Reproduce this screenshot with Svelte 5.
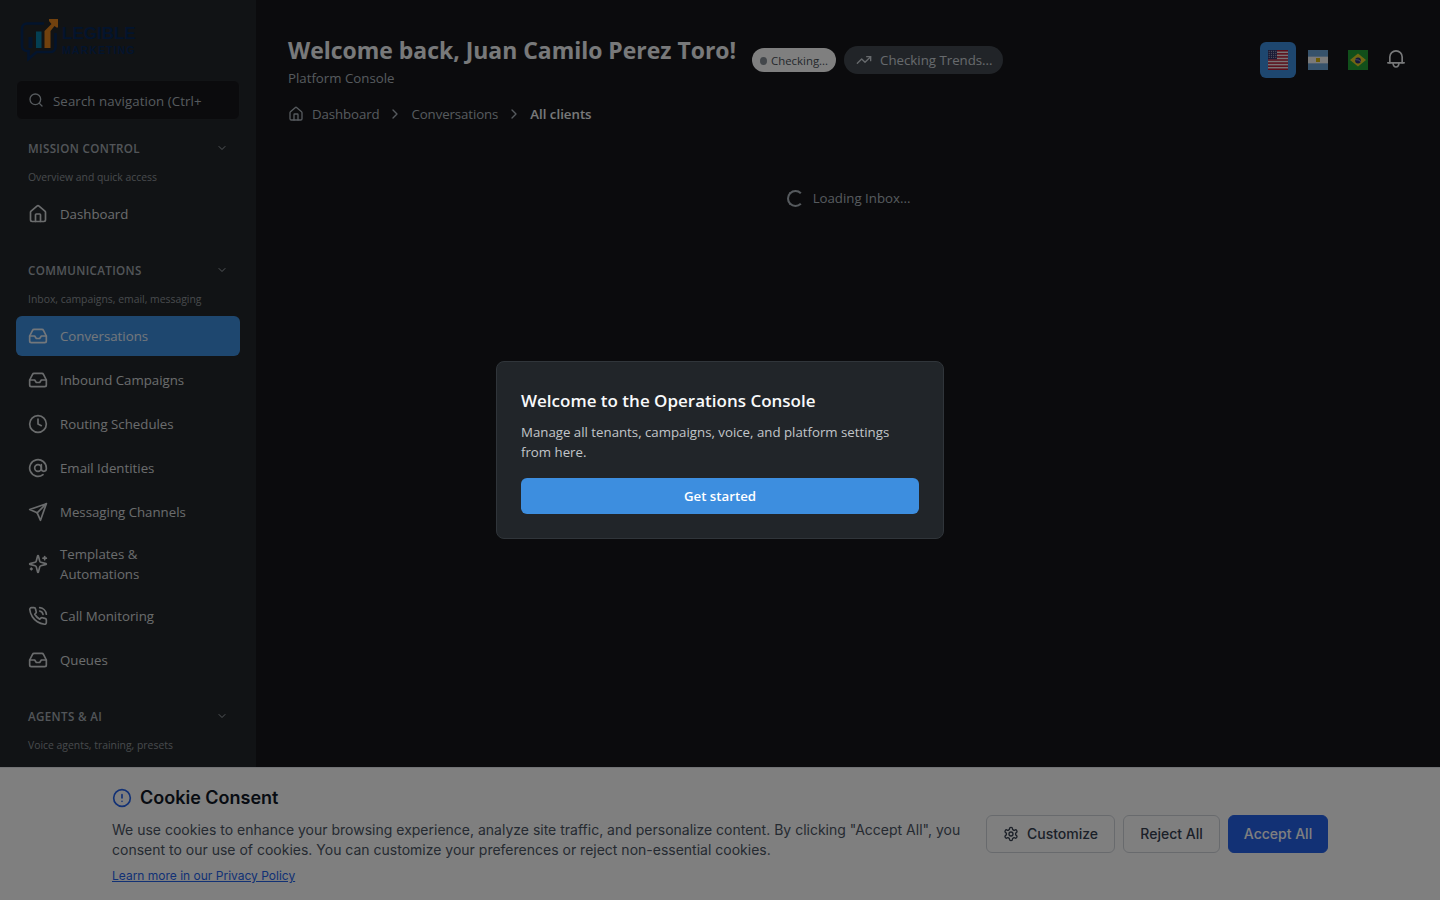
<script lang="ts">
  type IconName = keyof typeof icons;

  interface NavItem {
    label: string;
    icon: IconName;
  }

  interface NavSection {
    title: string;
    description: string;
    items: NavItem[];
  }

  const icons = {
    search: ["M21 21l-4.3-4.3", "M19 11a8 8 0 1 1-16 0a8 8 0 0 1 16 0z"],
    chevronDown: ["M6 9l6 6l6-6"],
    chevronRight: ["M9 18l6-6l-6-6"],
    home: [
      "M15 21v-8a1 1 0 0 0-1-1h-4a1 1 0 0 0-1 1v8",
      "M3 10a2 2 0 0 1 .709-1.528l7-5.999a2 2 0 0 1 2.582 0l7 5.999A2 2 0 0 1 21 10v9a2 2 0 0 1-2 2H5a2 2 0 0 1-2-2z",
    ],
    inbox: [
      "M22 12h-6l-2 3h-4l-2-3H2",
      "M5.45 5.11L2 12v6a2 2 0 0 0 2 2h16a2 2 0 0 0 2-2v-6l-3.45-6.89A2 2 0 0 0 16.76 4H7.24a2 2 0 0 0-1.79 1.11z",
    ],
    clock: ["M22 12a10 10 0 1 1-20 0a10 10 0 0 1 20 0z", "M12 6v6l4 2"],
    at: ["M16 12a4 4 0 1 1-8 0a4 4 0 0 1 8 0z", "M16 8v5a3 3 0 0 0 6 0v-1a10 10 0 1 0-4 8"],
    send: ["M22 2l-7 20l-4-9l-9-4z", "M22 2L11 13"],
    sparkles: [
      "M9.937 15.5A2 2 0 0 0 8.5 14.063l-6.135-1.582a.5.5 0 0 1 0-.962L8.5 9.936A2 2 0 0 0 9.937 8.5l1.582-6.135a.5.5 0 0 1 .963 0L14.063 8.5A2 2 0 0 0 15.5 9.937l6.135 1.581a.5.5 0 0 1 0 .964L15.5 14.063a2 2 0 0 0-1.437 1.437l-1.582 6.135a.5.5 0 0 1-.963 0z",
      "M20 3v4",
      "M22 5h-4",
      "M4 17v2",
      "M5 18H3",
    ],
    phone: [
      "M22 16.92v3a2 2 0 0 1-2.18 2a19.79 19.79 0 0 1-8.63-3.07a19.5 19.5 0 0 1-6-6a19.79 19.79 0 0 1-3.07-8.67A2 2 0 0 1 4.11 2h3a2 2 0 0 1 2 1.72a12.84 12.84 0 0 0 .7 2.81a2 2 0 0 1-.45 2.11L8.09 9.91a16 16 0 0 0 6 6l1.27-1.27a2 2 0 0 1 2.11-.45a12.84 12.84 0 0 0 2.81.7A2 2 0 0 1 22 16.92z",
      "M14.05 2a9 9 0 0 1 8 7.94",
      "M14.05 6A5 5 0 0 1 18 10",
    ],
    trending: ["M22 7l-8.5 8.5l-5-5L2 17", "M16 7h6v6"],
    bell: ["M2.200 16.600h19.600", "M4.600 16.600V9.600a7.400 7.400 0 0 1 14.800 0v7", "M8.500 17.200a3.500 4.400 0 0 0 7 0"],
    alert: ["M22 12a10 10 0 1 1-20 0a10 10 0 0 1 20 0z", "M12 8v4", "M12 16h.01"],
    gear: [
      "M12.22 2h-.44a2 2 0 0 0-2 2v.18a2 2 0 0 1-1 1.73l-.43.25a2 2 0 0 1-2 0l-.15-.08a2 2 0 0 0-2.73.73l-.22.38a2 2 0 0 0 .73 2.73l.15.1a2 2 0 0 1 1 1.72v.51a2 2 0 0 1-1 1.74l-.15.09a2 2 0 0 0-.73 2.73l.22.38a2 2 0 0 0 2.73.73l.15-.08a2 2 0 0 1 2 0l.43.25a2 2 0 0 1 1 1.73V20a2 2 0 0 0 2 2h.44a2 2 0 0 0 2-2v-.18a2 2 0 0 1 1-1.73l.43-.25a2 2 0 0 1 2 0l.15.08a2 2 0 0 0 2.73-.73l.22-.39a2 2 0 0 0-.73-2.73l-.15-.08a2 2 0 0 1-1-1.74v-.5a2 2 0 0 1 1-1.74l.15-.09a2 2 0 0 0 .73-2.73l-.22-.38a2 2 0 0 0-2.73-.73l-.15.08a2 2 0 0 1-2 0l-.43-.25a2 2 0 0 1-1-1.73V4a2 2 0 0 0-2-2z",
      "M15 12a3 3 0 1 1-6 0a3 3 0 0 1 6 0z",
    ],
  };

  const sections: NavSection[] = [
    {
      title: "Mission Control",
      description: "Overview and quick access",
      items: [{ label: "Dashboard", icon: "home" }],
    },
    {
      title: "Communications",
      description: "Inbox, campaigns, email, messaging",
      items: [
        { label: "Conversations", icon: "inbox" },
        { label: "Inbound Campaigns", icon: "inbox" },
        { label: "Routing Schedules", icon: "clock" },
        { label: "Email Identities", icon: "at" },
        { label: "Messaging Channels", icon: "send" },
        { label: "Templates & Automations", icon: "sparkles" },
        { label: "Call Monitoring", icon: "phone" },
        { label: "Queues", icon: "inbox" },
      ],
    },
    {
      title: "Agents & AI",
      description: "Voice agents, training, presets",
      items: [],
    },
  ];

  let activeItem = $state("Conversations");
  let locale = $state("en");
  let showWelcome = $state(true);
  let showCookies = $state(true);
</script>

{#snippet icon(name: IconName, size: number, stroke = 2)}
  <svg
    class="icon"
    width={size}
    height={size}
    viewBox="0 0 24 24"
    fill="none"
    stroke="currentColor"
    stroke-width={stroke}
    stroke-linecap="round"
    stroke-linejoin="round"
    aria-hidden="true"
  >
    {#each icons[name] as d}
      <path {d} />
    {/each}
  </svg>
{/snippet}

<div class="app">
  <aside class="sidebar">
    <div class="brand">
      <svg class="brand-mark" width="40" height="46" viewBox="0 0 40 46" aria-hidden="true">
        <path
          d="M25 5.500H8a5 5 0 0 0-5 5v17a5 5 0 0 0 5 5.500h1.500v8l8-7h14a5 5 0 0 0 5-5V15"
          fill="none"
          stroke="#07285a"
          stroke-width="2.6"
        />
        <rect x="9.500" y="19" width="4" height="11" fill="#07285a" />
        <rect x="17" y="13.500" width="5.500" height="16.500" fill="#087ea6" />
        <path d="M25.500 30V13l7-7l-2.500-3V1h9v8.500h-1.500l-2-1.500l-4 5V30z" fill="#e2821c" />
      </svg>
      <div class="brand-text">
        <span class="brand-name">LEGIBLE</span>
        <span class="brand-sub">MARKETING</span>
      </div>
    </div>

    <div class="search">
      {@render icon("search", 16)}
      <span>Search navigation (Ctrl+</span>
    </div>

    <nav>
      {#each sections as section}
        <section class="nav-section">
          <button class="nav-heading">
            <span>{section.title}</span>
            {@render icon("chevronDown", 12)}
          </button>
          <p class="nav-desc">{section.description}</p>
          <div class="nav-items">
            {#each section.items as item}
              <button
                class="nav-item"
                class:active={item.label === activeItem}
                onclick={() => activeItem = item.label}
              >
                {@render icon(item.icon, 20)}
                <span>{item.label}</span>
              </button>
            {/each}
          </div>
        </section>
      {/each}
    </nav>
  </aside>

  <main class="main">
    <header class="header">
      <div>
        <h1>Welcome back, Juan Camilo Perez Toro!</h1>
        <p class="subtitle">Platform Console</p>
      </div>
      <div class="pills">
        <span class="pill-status"><i class="dot"></i>Checking...</span>
        <span class="pill-trends">{@render icon("trending", 16)}Checking Trends...</span>
      </div>
      <div class="header-actions">
        <button class="flag" class:selected={locale === "en"} aria-label="English" onclick={() => locale = "en"}>
          <svg width="20" height="20" viewBox="0 0 20 20">
            <rect width="20" height="20" fill="#f0e8ea" />
            {#each [0, 3.08, 6.15, 9.23, 12.3, 15.4, 18.46] as y}
              <rect {y} width="20" height="1.540" fill="#b81c34" />
            {/each}
            <rect width="9" height="9.230" fill="#35376c" />
            {#each [1.3, 3.3, 5.3, 7.3] as y}
              {#each [1.2, 3.4, 5.6, 7.8] as x}
                <circle cx={x} cy={y} r="0.500" fill="#d8d8e4" />
              {/each}
            {/each}
          </svg>
        </button>
        <button class="flag" class:selected={locale === "es"} aria-label="Español" onclick={() => locale = "es"}>
          <svg width="20" height="20" viewBox="0 0 20 20">
            <rect width="20" height="20" fill="#6da4d6" />
            <rect y="6.670" width="20" height="6.660" fill="#f4f4f4" />
            <rect x="8" y="8" width="4" height="4" fill="#d9b70a" />
          </svg>
        </button>
        <button class="flag" class:selected={locale === "pt"} aria-label="Português" onclick={() => locale = "pt"}>
          <svg width="20" height="20" viewBox="0 0 20 20">
            <rect width="20" height="20" fill="#229e35" />
            <path d="M10 3.500L18 10l-8 6.500L2 10z" fill="#e3cd25" />
            <circle cx="10" cy="10.500" r="2.900" fill="#272f76" />
            <path d="M7.200 9.700q3.300-.4 5.600 1.800" fill="none" stroke="#d5dce9" stroke-width=".6" />
          </svg>
        </button>
        <button class="bell" aria-label="Notifications">{@render icon("bell", 20)}</button>
      </div>
    </header>

    <div class="breadcrumbs">
      {@render icon("home", 16)}
      <span class="crumb">Dashboard</span>
      {@render icon("chevronRight", 16)}
      <span class="crumb">Conversations</span>
      {@render icon("chevronRight", 16)}
      <strong>All clients</strong>
    </div>

    <div class="loading">
      <span class="spinner"></span>
      <span>Loading Inbox...</span>
    </div>
  </main>
</div>

{#if showCookies}
  <div class="cookies">
    <div class="cookies-inner">
      <div class="cookies-copy">
        <h3>{@render icon("alert", 20)}Cookie Consent</h3>
        <p>
          We use cookies to enhance your browsing experience, analyze site traffic, and personalize content. By clicking "Accept All", you consent to our use of cookies. You can customize your preferences or reject non-essential cookies.
        </p>
        <a href="#privacy">Learn more in our Privacy Policy</a>
      </div>
      <div class="cookies-actions">
        <button class="btn customize">{@render icon("gear", 16)}Customize</button>
        <button class="btn reject" onclick={() => showCookies = false}>Reject All</button>
        <button class="btn accept" onclick={() => showCookies = false}>Accept All</button>
      </div>
    </div>
  </div>
{/if}

{#if showWelcome}
  <div class="backdrop">
    <div class="modal" role="dialog" aria-modal="true" aria-labelledby="welcome-title">
      <h2 id="welcome-title">Welcome to the Operations Console</h2>
      <p>Manage all tenants, campaigns, voice, and platform settings from here.</p>
      <button class="start" onclick={() => showWelcome = false}>Get started</button>
    </div>
  </div>
{/if}

<style>
  :global(body) {
    margin: 0;
    background: #16171a;
    overflow: hidden;
  }

  :global(*) {
    box-sizing: border-box;
  }

  .app,
  .backdrop {
    font-family: "Segoe UI", "Open Sans", "Noto Sans", sans-serif;
    font-size: 13.25px;
    line-height: 20px;
  }

  h1,
  h2,
  h3,
  p {
    margin: 0;
  }

  button {
    font: inherit;
    color: inherit;
    border: 0;
    padding: 0;
    background: none;
    cursor: pointer;
  }

  .icon {
    display: block;
    flex-shrink: 0;
  }

  .app {
    display: flex;
    height: 100vh;
    color: #f1f3f5;
    overflow: hidden;
  }

  .sidebar {
    width: 256px;
    flex-shrink: 0;
    padding: 16px;
    background: #23272a;
    overflow: hidden;
  }

  .brand {
    display: flex;
    height: 64px;
    padding: 2px 0 0 3px;
    gap: 3px;
  }

  .brand-text {
    display: flex;
    flex-direction: column;
    padding-top: 6px;
    color: #07285a;
    font-family: "Liberation Sans", Arial, sans-serif;
    font-weight: 700;
  }

  .brand-name {
    font-size: 17px;
    line-height: 20px;
  }

  .brand-sub {
    font-size: 10.5px;
    line-height: 13px;
    letter-spacing: 1.1px;
  }

  .search {
    display: flex;
    align-items: center;
    gap: 9px;
    height: 40px;
    padding: 0 11px;
    margin-bottom: 10px;
    border: 1px solid #25282d;
    border-radius: 6px;
    background: #16171a;
    color: #adb5bd;
    letter-spacing: 0.1px;
    white-space: nowrap;
  }

  .search span {
    padding-top: 2px;
  }

  .nav-section {
    margin-bottom: 18px;
  }

  .nav-heading {
    display: flex;
    align-items: center;
    justify-content: space-between;
    width: 100%;
    height: 36px;
    padding: 0 12px;
    font-size: 11.6px;
    font-weight: 600;
    text-transform: uppercase;
    letter-spacing: 0.35px;
    color: #a5abb2;
  }

  .nav-heading span {
    padding-top: 1px;
  }

  .nav-desc {
    margin: 3px 0 9px;
    padding: 0 12px;
    font-size: 10.4px;
    line-height: 16px;
    color: #8f959b;
  }

  .nav-items {
    display: flex;
    flex-direction: column;
    gap: 4px;
  }

  .nav-item {
    display: flex;
    align-items: center;
    gap: 12px;
    min-height: 40px;
    padding: 8px 70px 8px 12px;
    border-radius: 6px;
    text-align: left;
    color: #d5d8db;
  }

  .nav-item:not(:nth-child(6)) {
    padding-right: 12px;
  }

  .nav-item.active {
    background: #3d8edf;
    color: #e6eef7;
  }

  .main {
    flex: 1;
    min-width: 0;
    padding: 32px;
    background: #16171a;
  }

  .header {
    display: flex;
    align-items: center;
    height: 56px;
  }

  h1 {
    font-size: 22.95px;
    font-weight: 700;
    line-height: 36px;
    white-space: nowrap;
  }

  .subtitle,
  .crumb {
    color: #adb5bd;
  }

  .pills {
    display: flex;
    align-items: center;
    gap: 8px;
    margin-left: 16px;
    white-space: nowrap;
  }

  .pill-status {
    display: flex;
    align-items: center;
    gap: 4px;
    width: 84px;
    height: 24px;
    padding: 1px 8px 0;
    border-radius: 12px;
    background: #fff;
    color: #495057;
    font-size: 11.4px;
  }

  .dot {
    width: 8px;
    height: 8px;
    border-radius: 50%;
    background: #868e96;
  }

  .pill-trends {
    display: flex;
    align-items: center;
    gap: 8px;
    width: 159px;
    height: 28px;
    padding: 0 12px;
    border-radius: 14px;
    background: #434951;
    color: #ced4da;
  }

  .header-actions {
    display: flex;
    align-items: center;
    gap: 4px;
    margin: 0 -4px 0 auto;
  }

  .flag,
  .bell {
    display: grid;
    place-items: center;
    width: 36px;
    height: 36px;
    border-radius: 6px;
  }

  .flag.selected {
    background: #3d8edf;
  }

  .bell {
    width: 32px;
    padding-bottom: 2px;
  }

  .breadcrumbs {
    display: flex;
    align-items: center;
    gap: 8px;
    margin-top: 16px;
    color: #adb5bd;
  }

  .crumb {
    letter-spacing: -0.1px;
  }

  .breadcrumbs strong {
    font-weight: 600;
    color: #f1f3f5;
  }

  .loading {
    display: flex;
    align-items: center;
    justify-content: center;
    gap: 9px;
    margin-top: 64px;
    padding-left: 1px;
    color: #adb5bd;
  }

  .spinner {
    width: 17px;
    height: 17px;
    border: 2px solid #adb5bd;
    border-right-color: transparent;
    border-radius: 50%;
  }

  .cookies {
    position: fixed;
    inset: auto 0 0 0;
    height: 133px;
    padding: 16px 112px;
    background: #fff;
    border-top: 1px solid #e5e7eb;
    font-family: Inter, sans-serif;
    font-size: 14px;
    line-height: 20px;
    color: #4b5563;
  }

  .cookies-inner {
    display: flex;
    align-items: center;
    justify-content: space-between;
  }

  .cookies-copy {
    width: 858px;
  }

  .cookies h3 {
    display: flex;
    align-items: center;
    gap: 8px;
    margin-bottom: 8px;
    font-size: 18px;
    font-weight: 600;
    line-height: 28px;
    color: #111827;
  }

  .cookies h3 .icon {
    color: #2563eb;
  }

  .cookies a {
    display: block;
    margin-top: 8px;
    font-size: 12px;
    line-height: 16px;
    color: #2563eb;
    text-decoration: underline;
  }

  .cookies-actions {
    display: flex;
    gap: 8px;
    white-space: nowrap;
  }

  .btn {
    display: flex;
    align-items: center;
    justify-content: center;
    gap: 8px;
    width: 97px;
    height: 38px;
    border: 1px solid #d1d5db;
    border-radius: 6px;
    font-weight: 500;
    color: #374151;
  }

  .btn.customize {
    width: 129px;
  }

  .btn.accept {
    width: 100px;
    border-color: #2563eb;
    background: #2563eb;
    color: #fff;
  }

  .backdrop {
    position: fixed;
    inset: 0;
    display: grid;
    place-items: center;
    background: rgba(0, 0, 0, 0.5);
  }

  .modal {
    width: 448px;
    padding: 24px;
    border: 1px solid #30353a;
    border-radius: 8px;
    background: #212529;
    color: #c1c5c9;
  }

  .modal h2 {
    margin-bottom: 7px;
    padding-top: 1px;
    font-size: 17px;
    font-weight: 600;
    line-height: 28px;
    color: #f8f9fa;
  }

  .start {
    width: 100%;
    height: 36px;
    margin-top: 16px;
    border-radius: 6px;
    background: #3d8edf;
    color: #fff;
    font-weight: 600;
  }
</style>
